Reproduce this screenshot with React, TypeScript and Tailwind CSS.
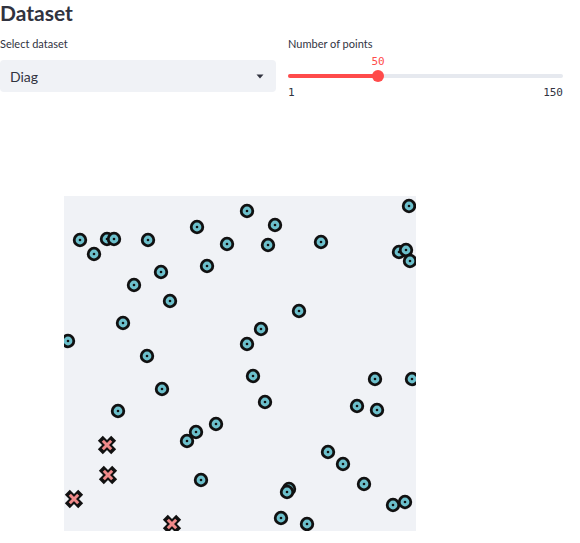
import React from "react";

const sans = { fontFamily: '"Source Sans Pro", Lato, "Noto Sans", sans-serif' };
const mono = { fontFamily: '"DejaVu Sans Mono", monospace' };

// plot frame in page coords
const PX = 64;
const PY = 196;
const PW = 352;
const PH = 335;

const circles: [number, number][] = [
  [409, 206], [247, 211], [197, 227], [275, 225], [80, 240], [107, 239], [114, 239],
  [148, 240], [227, 244], [268, 245], [321, 242], [94, 254], [399, 252], [406, 250],
  [410, 261], [161, 272], [207, 266], [134, 285], [170, 301], [299, 311], [123, 323],
  [261, 329], [68, 341], [247, 344], [147, 356], [253, 376], [375, 379], [412, 379],
  [162, 389], [265, 402], [118, 411], [357, 406], [377, 410], [216, 424], [196, 432],
  [187, 441], [328, 452], [343, 464], [364, 484], [201, 480], [289, 489], [287, 492],
  [393, 505], [405, 502], [281, 518], [307, 524],
];

const crosses: [number, number][] = [
  [107, 445], [108, 475], [74, 499], [172, 524],
];

function Cross({ x, y }: { x: number; y: number }) {
  const d = 4.2;
  const path = `M${x - d} ${y - d}L${x + d} ${y + d}M${x + d} ${y - d}L${x - d} ${y + d}`;
  return (
    <g>
      <path d={path} stroke="#111" strokeWidth={7} strokeLinecap="square" />
      <path d={path} stroke="#f08a8a" strokeWidth={3} strokeLinecap="butt" />
    </g>
  );
}

export default function App() {
  return (
    <div className="w-[580px] h-[543px] overflow-hidden bg-white text-[#31333f]" style={sans}>
      <h1 className="h-[20px] text-[21px] font-bold leading-[25px]">Dataset</h1>

      <div className="mt-[17px] flex gap-[12px]">
        {/* select */}
        <div className="w-[276px]">
          <div className="text-[11px] leading-[14px]">Select dataset</div>
          <div className="mt-[9px] flex h-[32px] items-center justify-between rounded-[4px] bg-[#f0f2f6] pl-[10px] pr-[12px]">
            <span className="text-[14px]">Diag</span>
            <svg width="8" height="5" viewBox="0 0 8 5">
              <path d="M0.5 0.5h7L4 4.5z" fill="#31333f" />
            </svg>
          </div>
        </div>

        {/* slider */}
        <div className="w-[275px]">
          <div className="text-[11px] leading-[14px]">Number of points</div>
          <div className="relative mt-[5px] h-[12px]">
            <span
              className="absolute top-0 -translate-x-1/2 text-[11px] leading-[12px] text-[#ff4b4b]"
              style={{ left: 90, ...mono }}
            >
              50
            </span>
          </div>
          <div className="relative mt-[2px] h-[12px]">
            <div className="absolute left-0 right-0 top-[4px] h-[4px] rounded-full bg-[#e6e9ef]" />
            <div className="absolute left-0 top-[4px] h-[4px] w-[90px] rounded-full bg-[#ff4b4b]" />
            <div className="absolute left-[84px] top-0 h-[12px] w-[12px] rounded-full bg-[#ff4b4b]" />
          </div>
          <div className="mt-[5px] flex justify-between text-[11px] leading-[12px]" style={mono}>
            <span>1</span>
            <span>150</span>
          </div>
        </div>
      </div>

      <div className="ml-[64px] mt-[97px]">
        <svg width={PW} height={PH} viewBox={`${PX} ${PY} ${PW} ${PH}`} className="block bg-[#f0f2f6]">
          {circles.map(([x, y], i) => (
            <g key={i}>
              <circle cx={x} cy={y} r={5.8} fill="#6cc0cc" stroke="#111" strokeWidth={2.8} />
              <circle cx={x} cy={y} r={1.3} fill="#111" />
            </g>
          ))}
          {crosses.map(([x, y], i) => (
            <Cross key={i} x={x} y={y} />
          ))}
        </svg>
      </div>
    </div>
  );
}
